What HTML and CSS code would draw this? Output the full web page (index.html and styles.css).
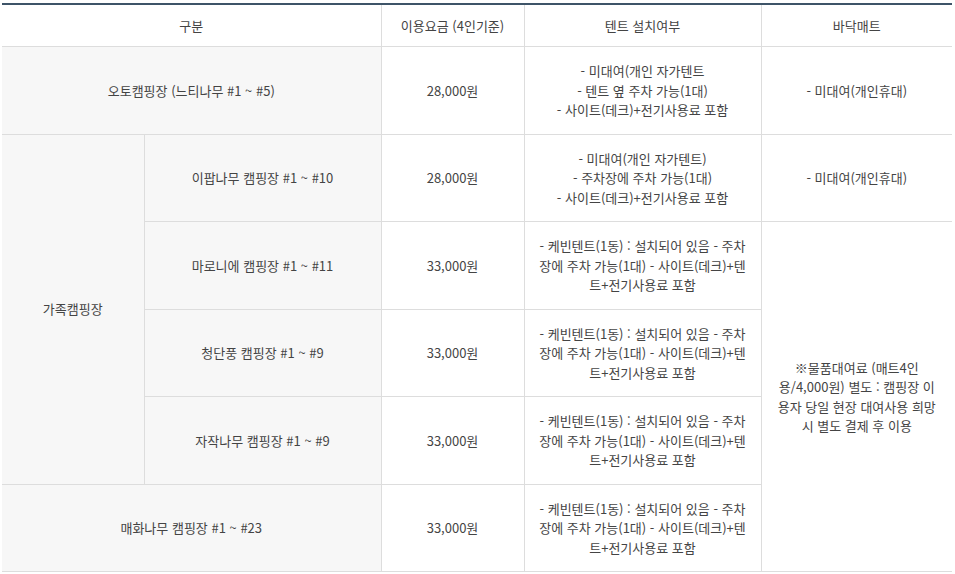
FILE: index.html
```html
<!DOCTYPE html>
<html lang="ko">
<head>
<meta charset="utf-8">
<title>요금안내</title>
<link rel="stylesheet" href="styles.css">
</head>
<body>
<div class="wrap">
<table class="price">
  <colgroup>
    <col class="c1"><col class="c2"><col class="c3"><col class="c4"><col class="c5">
  </colgroup>
  <thead>
    <tr>
      <th colspan="2">구분</th>
      <th>이용요금 (4인기준)</th>
      <th>텐트 설치여부</th>
      <th>바닥매트</th>
    </tr>
  </thead>
  <tbody>
    <tr>
      <td colspan="2" class="label">오토캠핑장 (느티나무 #1 ~ #5)</td>
      <td>28,000원</td>
      <td class="tent">- 미대여(개인 자가텐트<br>- 텐트 옆 주차 가능(1대)<br>- 사이트(데크)+전기사용료 포함</td>
      <td>- 미대여(개인휴대)</td>
    </tr>
    <tr>
      <td rowspan="4" class="label">가족캠핑장</td>
      <td class="label">이팝나무 캠핑장 #1 ~ #10</td>
      <td>28,000원</td>
      <td class="tent">- 미대여(개인 자가텐트)<br>- 주차장에 주차 가능(1대)<br>- 사이트(데크)+전기사용료 포함</td>
      <td>- 미대여(개인휴대)</td>
    </tr>
    <tr>
      <td class="label">마로니에 캠핑장 #1 ~ #11</td>
      <td>33,000원</td>
      <td class="tent">- 케빈텐트(1동) : 설치되어 있음 - 주차장에 주차 가능(1대) - 사이트(데크)+텐트+전기사용료 포함</td>
      <td rowspan="4" class="mat">※물품대여료 (매트4인용/4,000원) 별도 : 캠핑장 이용자 당일 현장 대여사용 희망시 별도 결제 후 이용</td>
    </tr>
    <tr>
      <td class="label">청단풍 캠핑장 #1 ~ #9</td>
      <td>33,000원</td>
      <td class="tent">- 케빈텐트(1동) : 설치되어 있음 - 주차장에 주차 가능(1대) - 사이트(데크)+텐트+전기사용료 포함</td>
    </tr>
    <tr>
      <td class="label">자작나무 캠핑장 #1 ~ #9</td>
      <td>33,000원</td>
      <td class="tent">- 케빈텐트(1동) : 설치되어 있음 - 주차장에 주차 가능(1대) - 사이트(데크)+텐트+전기사용료 포함</td>
    </tr>
    <tr>
      <td colspan="2" class="label">매화나무 캠핑장 #1 ~ #23</td>
      <td>33,000원</td>
      <td class="tent">- 케빈텐트(1동) : 설치되어 있음 - 주차장에 주차 가능(1대) - 사이트(데크)+텐트+전기사용료 포함</td>
    </tr>
  </tbody>
</table>
</div>
</body>
</html>
```
FILE: styles.css
```css
html, body {
  margin: 0;
  padding: 0;
  background: #fff;
}
.wrap {
  padding: 3px 3px 0 2px;
}
.price {
  width: 950px;
  table-layout: fixed;
  border-collapse: collapse;
  border-top: 2px solid #3e5468;
  font-family: "Noto Sans CJK KR", "Noto Sans", sans-serif;
  font-size: 13px;
  line-height: 19.5px;
  color: #444;
  text-align: center;
  word-break: normal;
}
.c1 { width: 142px; }
.c2 { width: 237px; }
.c3 { width: 143px; }
.c4 { width: 237px; }
.c5 { width: 191px; }
.price th {
  font-weight: normal;
  height: 41px;
  padding: 0 10px;
  border-bottom: 1px solid #ddd;
  border-left: 1px solid #ddd;
}
.price th:first-child { border-left: 0; }
.price td {
  height: 86.5px;
  padding: 0 15px;
  border: 1px solid #ddd;
  vertical-align: middle;
}
.price td.tent {
  padding: 0 11px;
}
.price tr td:first-child { border-left: 0; }
.price td.label {
  background: #f7f7f7;
}
.price td:last-child { border-right: 0; }
```
